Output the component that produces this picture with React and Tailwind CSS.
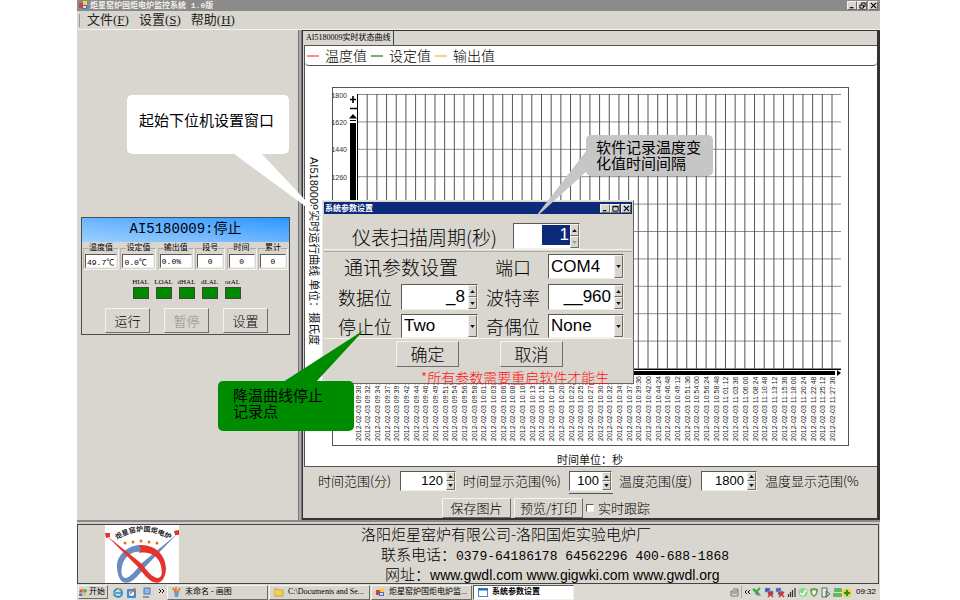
import React from "react";

const SANS = "font-['Liberation_Sans','Noto_Sans_CJK_SC',sans-serif]";
const THIN = "font-['Noto_Sans_CJK_SC',sans-serif] font-light";
const SERIF = "font-['Liberation_Serif','Noto_Sans_CJK_SC',serif]";
const MONO = "font-['Liberation_Mono','Noto_Sans_CJK_SC',monospace]";
const RAISED = "border border-t-[#f4f3ef] border-l-[#f4f3ef] border-r-[#6e6c66] border-b-[#6e6c66] bg-[#d9d6cf]";
const SUNKEN = "border border-t-[#5c5a55] border-l-[#5c5a55] border-r-[#f0efea] border-b-[#f0efea] bg-white";

function Arrow({ up, dim }) {
  return (
    <svg viewBox="0 0 6 4" className="h-[3px] w-[5px]" aria-hidden="true">
      <path d={up ? "M0 4L3 0L6 4Z" : "M0 0L3 4L6 0Z"} fill={dim ? "#999" : "#111"} />
    </svg>
  );
}

function Steps({ dimDown }) {
  const b = `flex flex-1 items-center justify-center ${RAISED}`;
  return (
    <span className="flex w-[9px] shrink-0 flex-col">
      <button className={b} aria-label="增加"><Arrow up /></button>
      <button className={b} aria-label="减少"><Arrow dim={dimDown} /></button>
    </span>
  );
}

function Spin({ label, value, box, text }) {
  return (
    <span className={`flex ${SUNKEN} ${box}`}>
      <input aria-label={label} defaultValue={value} className={`min-w-0 flex-1 bg-transparent pr-[3px] text-right font-normal text-black outline-none ${SANS} ${text}`} />
      <Steps />
    </span>
  );
}

function Pick({ id, value, box }) {
  return (
    <span className={`relative flex ${SUNKEN} ${box}`}>
      <select id={id} defaultValue={value} className={`w-full appearance-none bg-transparent pl-[2px] text-[17px] leading-5 font-normal text-black outline-none ${SANS}`}>
        <option>{value}</option>
      </select>
      <span className={`pointer-events-none absolute top-0 right-0 bottom-0 flex w-[9px] items-center justify-center ${RAISED}`}>
        <Arrow />
      </span>
    </span>
  );
}

function WinButtons({ restore }) {
  const b = `flex h-[9px] w-[10px] items-center justify-center ${RAISED}`;
  return (
    <span className="flex">
      <button className={b} aria-label="最小化"><svg viewBox="0 0 8 8" className="size-[7px]"><path d="M1 6.5H5" stroke="#000" strokeWidth="1.4" /></svg></button>
      <button className={b} aria-label="最大化">
        <svg viewBox="0 0 8 8" className="size-[7px]" fill="none" stroke="#000" strokeWidth="1.1">
          {restore ? <path d="M3 3V1H7V5H5M1 3.5H5V7H1Z" /> : <path d="M1 1.5H7V7H1Z M1 2H7" />}
        </svg>
      </button>
      <button className={`${b} ml-px`} aria-label="关闭"><svg viewBox="0 0 8 8" className="size-[7px]"><path d="M1 1L7 7M7 1L1 7" stroke="#000" strokeWidth="1.4" /></svg></button>
    </span>
  );
}

function AppIcon() {
  return (
    <svg viewBox="0 0 9 9" className="size-[9px] shrink-0" aria-hidden="true">
      <rect x="0" y="2" width="4" height="5" fill="#d8432b" /><rect x="4" y="0" width="4" height="5" fill="#f5cf45" />
      <rect x="3" y="4" width="5" height="4" fill="#4a6fc4" /><rect x="4" y="5" width="3" height="2" fill="#cfe0ff" />
    </svg>
  );
}

const readings = [
  ["温度值", "49.7℃", "w-9", "text-left"],
  ["设定值", "0.0℃", "w-9", "text-left"],
  ["输出值", "0.0%", "w-9", "text-left"],
  ["段号", "0", "w-[30px]", "text-center"],
  ["时间", "0", "w-[30px]", "text-center"],
  ["累计", "0", "w-[30px]", "text-center"],
];

function StatusCard() {
  return (
    <section className="mt-[187px] mr-2 ml-1 h-[118px] border border-[#4d4d4d] bg-[#d9d6cf]">
      <h2 className={`h-6 bg-linear-to-tr from-[#9dd0ff] to-[#2497ff] text-center text-[14px] leading-[22px] text-black ${MONO}`}>AI5180009:停止</h2>
      <div className="flex justify-between px-px">
        {readings.map(([name, value, w, align]) => (
          <label key={name} className={`relative mt-[6px] flex h-[22px] border border-[#f4f3ef] border-t-[#aaa8a2] border-l-[#b9b7b0] px-px pt-[5px] ${w}`}>
            <span className="absolute -top-[7px] left-1/2 -translate-x-1/2 bg-[#d9d6cf] text-[8px] leading-3 whitespace-nowrap text-black">{name}</span>
            <input defaultValue={value} className={`h-[14px] w-full min-w-0 px-px text-[8px] leading-3 text-black ${SUNKEN} ${align} ${MONO}`} />
          </label>
        ))}
      </div>
      <ul className="mt-[7px] ml-[50px] flex gap-[6px]">
        {["HIAL", "LOAL", "dHAL", "dLAL", "orAL"].map((n) => (
          <li key={n} className="flex w-[17px] flex-col items-center">
            <span className={`text-[7px] leading-[10px] text-black ${SERIF}`}>{n}</span>
            <span className="h-3 w-4 border border-[#444] bg-[#008a00]" />
          </li>
        ))}
      </ul>
      <div className={`mt-[9px] ml-[23px] flex gap-[14px] text-[13px] text-black ${THIN}`}>
        <button className={`h-[25px] w-[45px] ${RAISED}`}>运行</button>
        <button disabled className={`h-[25px] w-[45px] text-[#8f8d87] ${RAISED}`}>暂停</button>
        <button className={`h-[25px] w-[45px] ${RAISED}`}>设置</button>
      </div>
    </section>
  );
}

const STEP_X = 474.5 / 49;
const marks = Array.from({ length: 50 }, (_, i) => {
  const sec = 9 * 3600 + 30 * 60 + i * 144;
  const p = (n) => String(Math.floor(n)).padStart(2, "0");
  return { x: 357.5 + i * STEP_X, label: `2012-02-03 ${p(sec / 3600)}:${p((sec / 60) % 60)}:${p(sec % 60)}` };
});
const levels = Array.from({ length: 11 }, (_, i) => ({ y: 95.5 + i * 27.4, v: 1800 - i * 180 }));

function Chart() {
  return (
    <svg viewBox="305 67 572 400" preserveAspectRatio="xMinYMin meet" className={`h-[400px] w-full ${SANS}`}>
      <rect x="332.5" y="88.5" width="516" height="358" fill="#fff" stroke="#555" />
      {levels.map((l) => (
        <g key={l.v}>
          <path d={`M357 ${l.y}H841`} stroke="#8c8c8c" />
          {l.v > 1200 && <text x="347" y={l.y + 3} textAnchor="end" fontSize="7" fill="#333">{l.v}</text>}
        </g>
      ))}
      {marks.map((m) => (
        <g key={m.label}>
          <path d={`M${m.x} 95V370`} stroke="#555" />
          <text transform={`translate(${m.x + 3} 442) rotate(-90)`} fontSize="7" fill="#222">{m.label}</text>
        </g>
      ))}
      <path d="M357.5 95V371" stroke="#000" />
      <rect x="350" y="124" width="6" height="250" fill="#000" />
      <path d="M350 100.500H356M353 97V104M350 109.500H357" stroke="#000" strokeWidth="1.6" />
      <path d="M349 119.500L353 115L357 119.500Z" fill="#000" />
      <path d="M350 121.500H356" stroke="#000" strokeWidth="1" />
      <path d="M357 370.500H841" stroke="#000" />
      <rect x="357" y="372" width="478" height="4" fill="#000" />
      <path d="M837 371V377L841 374Z" fill="#000" />
      <text transform="translate(310 158) rotate(90)" fontSize="11" fill="#111">AI5180009实时运行曲线 单位：摄氏度</text>
      <text x="557" y="465" fontSize="11" fill="#111">时间单位：秒</text>
    </svg>
  );
}

function MonitorPanel() {
  return (
    <main className="flex min-w-0 flex-1 flex-col border border-[#333] border-r-[3px] border-b-2">
      <div role="tablist" className="flex h-[15px]">
        <button role="tab" aria-selected="true" className={`border-r border-[#444] px-[3px] text-[8px] leading-3 whitespace-nowrap text-black ${SERIF}`}>AI5180009实时状态曲线</button>
      </div>
      <div className="ml-px border-y border-l border-[#555] bg-white">
        <div className={`flex h-5 items-center rounded-b-sm border-b border-[#555] pl-[2px] text-[14px] text-black ${THIN}`}>
          <span className="mr-[6px] h-[2px] w-3 bg-[#ff8c8c]" />温度值
          <span className="mr-[6px] ml-1 h-[2px] w-3 bg-[#6ab56a]" />设定值
          <span className="mr-[6px] ml-1 h-[2px] w-3 bg-[#ffd27a]" />输出值
        </div>
        <Chart />
      </div>
      <div className={`flex items-center pt-1 pl-[15px] text-[13px] leading-5 whitespace-nowrap text-black ${THIN}`}>
        <span className="w-[82px]">时间范围(分)</span>
        <Spin label="时间范围(分)" value="120" box="h-5 w-14" text="text-[13px]" />
        <span className="ml-[7px] w-[106px]">时间显示范围(%)</span>
        <Spin label="时间显示范围(%)" value="100" box="h-5 w-[43px]" text="text-[13px]" />
        <span className="ml-[7px] w-[82px]">温度范围(度)</span>
        <Spin label="温度范围(度)" value="1800" box="h-5 w-14" text="text-[13px]" />
        <span className="ml-2">温度显示范围(%</span>
      </div>
      <div className="mt-[2px] ml-[266px] h-px w-11 bg-[#555]" />
      <div className={`mt-1 ml-[139px] flex items-center text-[13px] leading-5 text-black ${THIN}`}>
        <button className={`h-5 w-[69px] leading-[18px] ${RAISED}`}>保存图片</button>
        <button className={`ml-[3px] h-5 w-[69px] leading-[18px] ${RAISED}`}>预览/打印</button>
        <label className="ml-[3px] flex items-center gap-1">
          <input type="checkbox" className={`size-2 appearance-none ${SUNKEN}`} />实时跟踪
        </label>
      </div>
    </main>
  );
}

function Logo() {
  return (
    <svg viewBox="0 0 74 58" className="h-[58px] w-[74px] bg-white" role="img" aria-label="炬星窑炉国炬电炉">
      <defs><path id="arc" d="M12 15Q37 -2 65 15" /></defs>
      <path d="M36 20C22 20 11 31 12 43C13 54 17 60 25 57C31 54 36 47 42 40L72 9L37 38C31 45 25 53 20 53C16 52 16 46 17 41C19 32 27 25 37 27Z" fill="#6b8bc0" />
      <path d="M34 20L36 24L34 28C46 26 54 32 56 41C57 46 58 52 53 53C48 53 42 46 37 39L2 11L33 42C38 48 42 54 48 57C56 60 60 54 61 44C61 31 51 19 34 20Z" fill="#e5322d" />
      <path d="M0 8L5 8L5 12L1 13ZM69 6L74 5L74 10L70 10Z" fill="#e5322d" />
      {[20, 28, 36, 44, 52].map((x, i) => <circle key={x} cx={x} cy={[18, 17, 16, 17, 18][i]} r="1.500" fill="#ee6a1d" />)}
      <text fontSize="7" fontWeight="700" fill="#222" className={SANS}><textPath href="#arc">炬星窑炉国炬电炉</textPath></text>
    </svg>
  );
}

function Footer() {
  return (
    <footer className={`mr-px flex h-[60px] border border-[#444] pl-[27px] text-[15px] leading-5 whitespace-pre text-black ${THIN}`}>
      <Logo />
      <address className="-mt-px ml-[182px] not-italic">
        <p className="h-5">洛阳炬星窑炉有限公司-洛阳国炬实验电炉厂</p>
        <p className="ml-5 h-5">联系电话：<span className={`text-[13px] font-normal ${MONO}`}>0379-64186178 64562296 400-688-1868</span></p>
        <p className="ml-6 h-5">网址：<span className={`text-[14px] font-normal ${SANS}`}><a href="#gwdl">www.gwdl.com</a> <a href="#gigwki">www.gigwki.com</a> <a href="#org">www.gwdl.org</a></span></p>
      </address>
    </footer>
  );
}

function Taskbar() {
  const task = `mr-px flex h-[15px] w-[101px] items-center gap-1 overflow-hidden pl-1 whitespace-nowrap ${RAISED}`;
  return (
    <nav className={`flex h-4 items-center bg-[#dcdad3] text-[8px] text-black ${SERIF}`}>
      <button className={`ml-px flex h-[14px] w-[30px] items-center gap-px ${RAISED}`}>
        <svg viewBox="0 0 10 10" className="size-[9px]"><path d="M1 2L4 1V5L0 5Z" fill="#e0522d" /><path d="M5 1L9 2L8 5H5Z" fill="#5aa53a" /><path d="M0 6H4L3 9L0 9Z" fill="#3f74d0" /><path d="M5 6H8L7 9H4Z" fill="#f0c030" /></svg>
        开始
      </button>
      <svg viewBox="0 0 59 14" className="h-[14px] w-[59px]" aria-hidden="true">
        <circle cx="10" cy="8" r="4" fill="none" stroke="#2b8fdc" strokeWidth="2" /><path d="M7 8H14" stroke="#2b8fdc" strokeWidth="1.500" /><path d="M4 11Q9 2 15 4" fill="none" stroke="#e7c04a" />
        <rect x="19" y="4" width="9" height="9" rx="1" fill="#3a8fd8" /><circle cx="23.500" cy="8.500" r="2.500" fill="#fff" /><path d="M22 9L27 3" stroke="#e0662c" strokeWidth="1.500" />
        <rect x="36" y="3" width="6" height="6" fill="#8db8e8" stroke="#5478b0" /><path d="M35 12H41" stroke="#6f7f9c" strokeWidth="1.500" />
        <path d="M51 4L53 6L51 8M54 4L56 6L54 8" fill="none" stroke="#111" />
      </svg>
      <button className={task}>
        <svg viewBox="0 0 9 10" className="h-[10px] w-[9px]"><path d="M1 1L4 6M4 0V6M8 1L5 6" stroke="#d8763a" strokeWidth="1.500" /><path d="M2 5H7L6 10H3Z" fill="#6f9ac4" /></svg>
        未命名 - 画图
      </button>
      <button className={task}>
        <svg viewBox="0 0 10 9" className="h-[9px] w-[10px] shrink-0"><path d="M0 1H4L5 2H9V8H0Z" fill="#f3cf56" stroke="#b08a24" strokeWidth=".6" /></svg>
        C:\Documents and Se...
      </button>
      <button className={task}><AppIcon />炬星窑炉国炬电炉监...</button>
      <button className={`flex h-[15px] w-[101px] items-center gap-1 pl-1 font-bold ${SUNKEN}`}>
        <svg viewBox="0 0 10 9" className="h-[9px] w-[10px]"><rect x=".5" y=".5" width="9" height="8" fill="#fff" stroke="#4a86c8" /><path d="M0 1.500H10" stroke="#2b67c0" strokeWidth="2" /></svg>
        系统参数设置
      </button>
      <div className="mr-1 ml-auto flex items-center">
        <svg viewBox="0 0 122 14" className="mr-1 h-[14px] w-[122px]" aria-hidden="true">
          <path d="M1 6H8V11H1ZM2 8H7M3 4H8V6" fill="none" stroke="#777" /><path d="M11.500 1V13" stroke="#aaa" />
          <path d="M17 5L15 7L17 9M20 5L18 7L20 9" fill="none" stroke="#111" />
          <path d="M23 3L28 6L31 11L26 10Z" fill="#6e8f74" /><path d="M23 4L26 7L30 3" fill="none" stroke="#35b035" strokeWidth="2" />
          <path d="M35 3H40V7H35ZM38 6H43V10H38Z" fill="#3d5fa8" stroke="#8fa5cf" strokeWidth=".5" /><path d="M38 7L43 12M43 7L38 12" stroke="#e02a2a" strokeWidth="1.500" />
          <path d="M46 3H51V7H46ZM48 6H53V10H48Z" fill="#4a66a0" stroke="#a0afcf" strokeWidth=".5" /><path d="M49 7L54 12M54 7L49 12" stroke="#e02a2a" strokeWidth="1.500" />
          <path d="M58.500 12V9M60.500 12V7M62.500 12V5M65 12V3" stroke="#333" strokeWidth="1.200" />
          <circle cx="73" cy="7.500" r="4.500" fill="#8bd88b" /><path d="M70 8L73 10L76 5" fill="none" stroke="#fff" strokeWidth="1.500" />
          <path d="M84 3L88 4Q88 10 84 12Q80 10 80 4Z" fill="#63a548" /><path d="M84 5L86 6Q86 9 84 10Q82 9 82 6Z" fill="#fff" />
          <path d="M92 3H97V12H92ZM96 6L100 9L96 12Z" fill="#e8f0e8" stroke="#4f6f58" />
          <rect x="104" y="3" width="8" height="4" rx="1" fill="#62b862" /><rect x="103" y="8" width="9" height="4" rx="1" fill="#62b862" />
          <circle cx="117" cy="8" r="4.500" fill="#f2d228" /><path d="M114 8H120M117 5V11" stroke="#21902f" strokeWidth="2" />
        </svg>
        <time className={SANS}>09:32</time>
      </div>
    </nav>
  );
}

function SettingsDialog() {
  return (
    <div role="dialog" aria-label="系统参数设置" className={`absolute top-[200px] left-[322px] h-[184px] w-[312px] border border-t-[#e8e6e0] border-l-[#e8e6e0] border-r-[#666] border-b-[#666] bg-[#d9d6cf] p-px text-[18px] leading-6 text-black ${THIN}`}>
      <header className="flex h-3 items-center justify-between bg-[#0d2a7a] px-px text-[8px] leading-3 font-bold text-white">
        系统参数设置
        <WinButtons />
      </header>
      <div className="flex h-9 items-end border-b border-[#f4f3ef]">
        <label htmlFor="cycle" className="ml-7 w-[161px] text-[19px] whitespace-nowrap">仪表扫描周期(秒)</label>
        <span className={`flex h-[26px] w-[67px] ${SUNKEN}`}>
          <span className="mt-px ml-auto flex h-5 w-7 bg-[#0d2a7a]">
            <input id="cycle" defaultValue="1" className={`w-full bg-transparent pr-px text-right text-[17px] leading-5 font-normal text-white outline-none ${SANS}`} />
          </span>
          <Steps dimDown />
        </span>
      </div>
      <fieldset className="mt-px h-[88px] border-y border-t-[#aeaca5] border-b-[#f4f3ef]">
        <div className="mt-[2px] flex items-center">
          <legend className="ml-5 w-[151px] text-[19px]">通讯参数设置</legend>
          <label htmlFor="port" className="w-[53px]">端口</label>
          <Pick id="port" value="COM4" box="h-[25px] w-[76px]" />
        </div>
        <div className="mt-[5px] flex items-center">
          <span className="ml-[14px] w-[63px]">数据位</span>
          <Spin label="数据位" value="_8" box="h-[26px] w-[77px]" text="text-[17px]" />
          <span className="ml-2 w-[62px]">波特率</span>
          <Spin label="波特率" value="__960" box="h-[26px] w-[76px]" text="text-[17px]" />
        </div>
        <div className="mt-[4px] flex items-center">
          <label htmlFor="stop" className="ml-[14px] w-[63px]">停止位</label>
          <Pick id="stop" value="Two" box="h-6 w-[77px]" />
          <label htmlFor="parity" className="ml-2 w-[62px]">奇偶位</label>
          <Pick id="parity" value="None" box="h-6 w-[76px]" />
        </div>
      </fieldset>
      <div className="mt-[2px] ml-[72px] flex gap-[41px] text-[17px]">
        <button className={`h-[26px] w-[63px] ${RAISED}`}>确定</button>
        <button className={`h-[26px] w-[63px] ${RAISED}`}>取消</button>
      </div>
      <p className="ml-[97px] text-[14px] leading-5 whitespace-nowrap text-[#ff1010]">*所有参数需要重启软件才能生</p>
    </div>
  );
}

function Callouts() {
  return (
    <>
      <svg viewBox="0 0 960 600" className="pointer-events-none absolute top-0 left-0 h-[600px] w-[960px]" aria-hidden="true">
        <path d="M233 153L261 153L324 220Z" fill="#fff" />
        <path d="M587 150L587 171L533 220Z" fill="#c6c6c6" />
        <path d="M283 382L316 382L364 330Z" fill="#008c00" />
      </svg>
      <p className="absolute top-[95px] left-[127px] h-[59px] w-[162px] rounded-[5px] bg-white pt-4 pl-3 text-[15px] leading-5 text-black">起始下位机设置窗口</p>
      <p className="absolute top-[135px] left-[586px] h-[41px] w-[127px] rounded-[5px] bg-[#c6c6c6] pt-[5px] pl-[10px] text-[15px] leading-4 text-black">软件记录温度变<br />化值时间间隔</p>
      <p className="absolute top-[381px] left-[218px] h-[50px] w-[136px] rounded-[5px] bg-[#008c00] pt-[7px] pl-[15px] text-[15px] leading-4 text-black">降温曲线停止<br />记录点</p>
    </>
  );
}

export default function App() {
  return (
    <div className={`relative bg-white pr-20 pl-[77px] ${SANS}`}>
      <div className="flex flex-col bg-[#d9d6cf]">
        <header className="flex h-[11px] items-center bg-[#8b8b8b] pr-[2px] pl-[2px] text-[8px] leading-[11px] text-[#f0eee8]">
          <AppIcon />
          <h1 className={`mr-auto ml-[2px] font-bold ${MONO}`}>炬星窑炉国炬电炉监控系统 1.0版</h1>
          <WinButtons restore />
        </header>
        <nav className={`flex h-[19px] items-center border-b border-[#f4f3ef] pl-[2px] text-[13px] text-[#222] ${SERIF}`}>
          <span className="mr-[7px] h-[13px] w-px bg-[#999]" />
          <div className="flex gap-[10px]">
            <button>文件(<u>F</u>)</button>
            <button>设置(<u>S</u>)</button>
            <button>帮助(<u>H</u>)</button>
          </div>
        </nav>
        <div className="flex h-[490px]">
          <aside className="w-[221px] shrink-0"><StatusCard /></aside>
          <div className="w-1 shrink-0 border-x border-[#777] bg-[#aaa]" />
          <MonitorPanel />
        </div>
        <div className="h-1 border-t-2 border-[#8b8b8b] bg-[#d0cec8]" />
        <Footer />
        <Taskbar />
      </div>
      <SettingsDialog />
      <Callouts />
    </div>
  );
}
